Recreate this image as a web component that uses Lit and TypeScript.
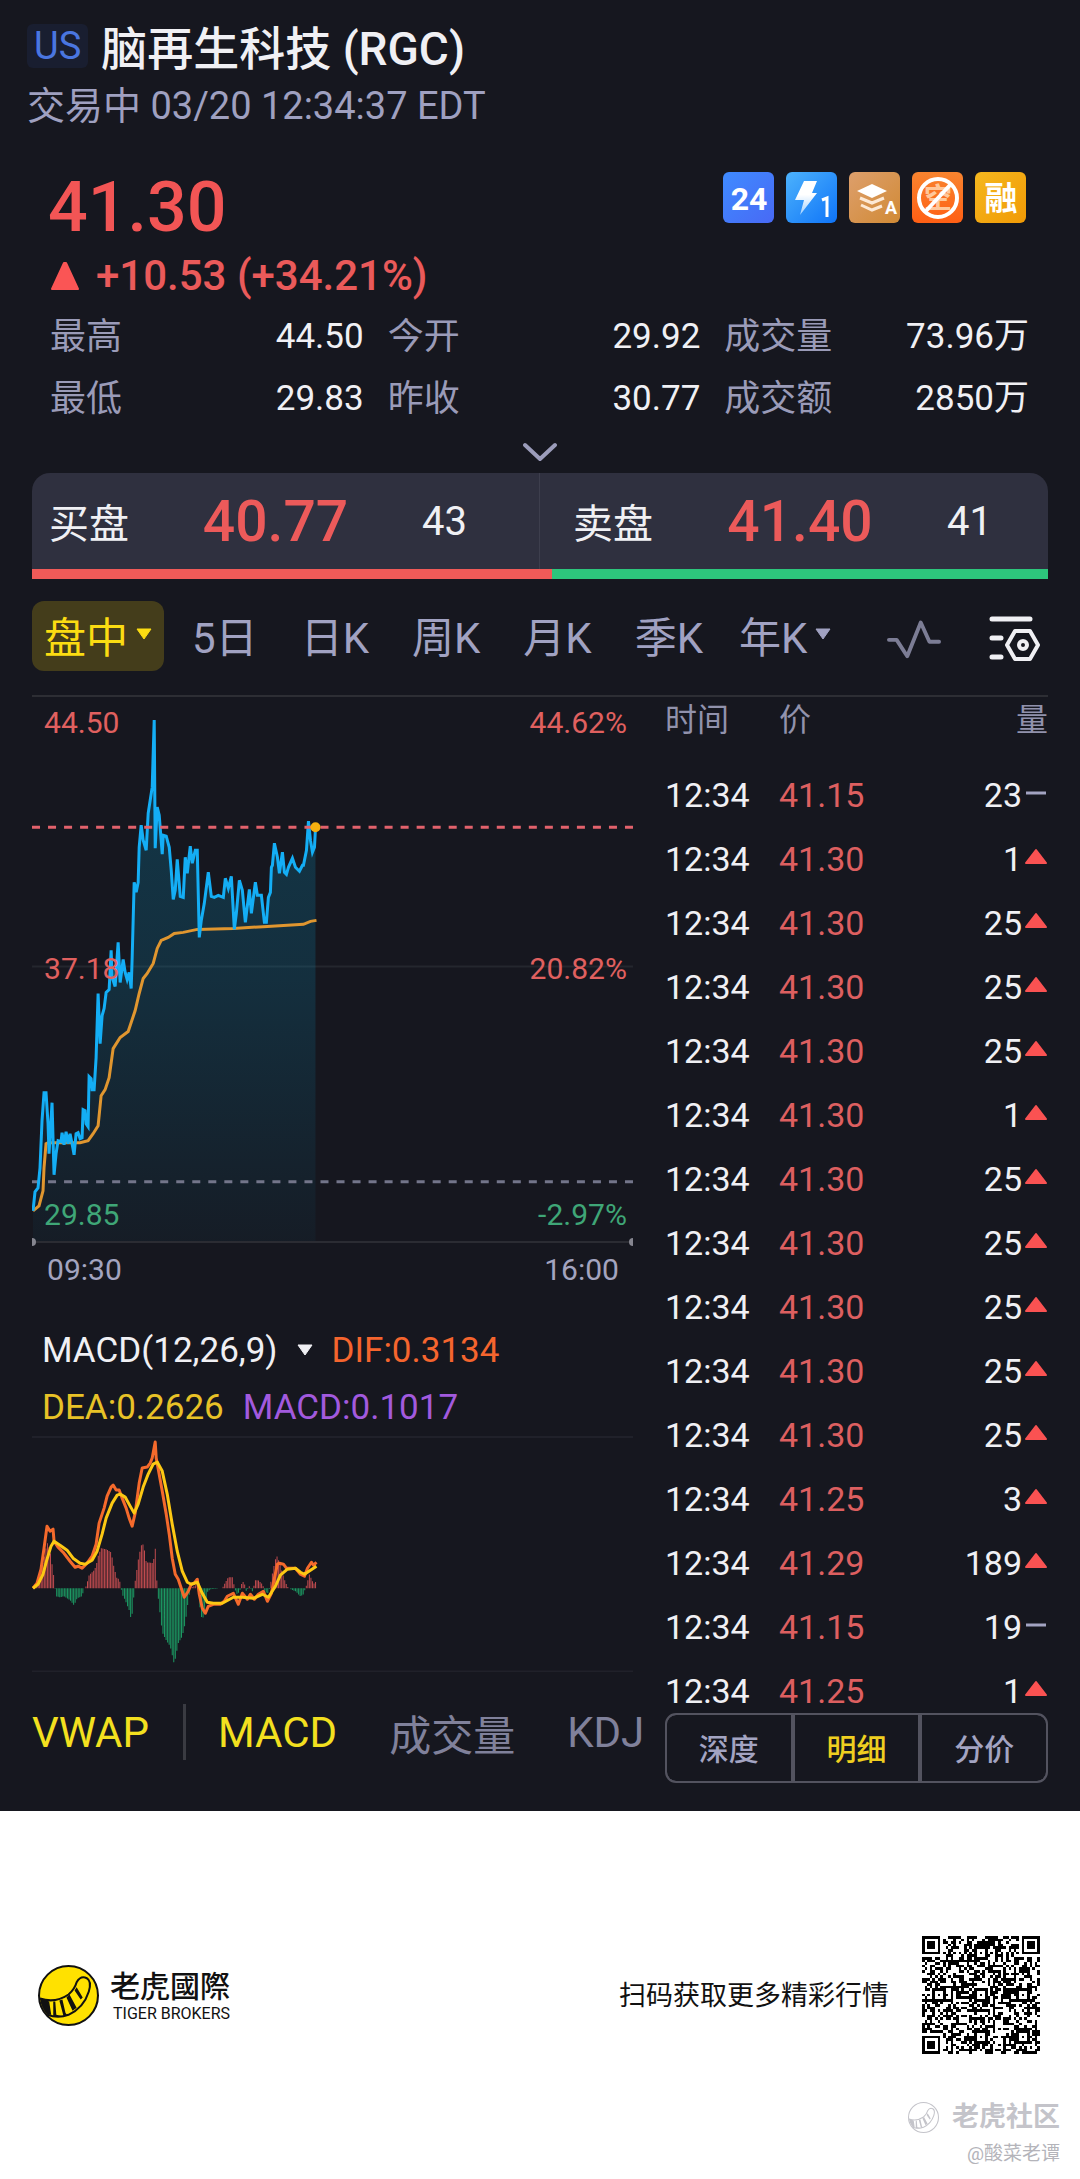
import { LitElement, html, svg, css } from "lit";
import { customElement, state } from "lit/decorators.js";
import { classMap } from "lit/directives/class-map.js";

type Point = [number, number];

const PRICE: Point[] = [
  [1, 513], [3, 494], [6, 490], [8, 470], [10, 423], [12, 395], [14, 395], [16, 426], [17, 456],
  [20, 405], [22, 477], [24, 456], [26, 443], [29, 444], [30, 435], [32, 447], [34, 434], [36, 446],
  [38, 436], [40, 446], [42, 457], [44, 436], [46, 435], [48, 441], [50, 440], [51, 412], [53, 413],
  [54, 426], [56, 429], [57, 379], [59, 381], [60, 392], [62, 392], [64, 360], [66, 296], [68, 346],
  [70, 318], [72, 311], [74, 295], [77, 292], [79, 253], [80, 280], [83, 289], [86, 245], [88, 285],
  [91, 262], [93, 275], [95, 282], [97, 275], [99, 291], [100, 260], [102, 185], [104, 195],
  [106, 185], [107, 150], [109, 128], [111, 143], [114, 153], [116, 116], [118, 103], [120, 90],
  [122, 23], [123, 151], [125, 110], [127, 118], [130, 157], [131, 138], [134, 139], [137, 150],
  [139, 173], [141, 202], [143, 193], [145, 162], [148, 199], [151, 200], [153, 160], [155, 176],
  [158, 149], [160, 166], [163, 153], [165, 153], [167, 240], [169, 223], [172, 206], [176, 175],
  [179, 199], [182, 200], [186, 198], [191, 200], [193, 181], [196, 191], [199, 179], [202, 232],
  [204, 216], [207, 183], [210, 193], [213, 225], [217, 192], [219, 216], [223, 185], [225, 198],
  [229, 198], [232, 225], [234, 225], [236, 200], [238, 195], [239, 170], [240, 168], [242, 146],
  [245, 160], [247, 176], [250, 155], [252, 175], [254, 177], [256, 170], [260, 161], [263, 170],
  [267, 174], [270, 168], [271, 168], [274, 153], [276, 124], [278, 143], [280, 155], [282, 150],
  [283, 131],
];

const VWAP: Point[] = [
  [1, 513], [7, 508], [11, 493], [12, 470], [14, 446], [16, 445], [48, 445], [56, 443], [61, 436],
  [66, 428], [69, 398], [73, 392], [77, 380], [81, 351], [88, 340], [96, 334], [103, 313],
  [107, 296], [111, 281], [115, 276], [121, 266], [125, 251], [129, 243], [136, 240], [142, 236],
  [151, 235], [165, 232], [201, 231], [235, 229], [271, 227], [278, 224], [284, 223],
];

const DIF: Point[] = [
  [1, 152], [5, 147], [9, 133], [12, 112], [15, 90], [18, 95], [21, 93], [22, 105], [26, 111],
  [31, 116], [38, 125], [43, 131], [46, 130], [50, 132], [55, 127], [60, 120], [64, 108], [67, 87],
  [72, 72], [75, 60], [79, 51], [81, 49], [84, 54], [87, 54], [90, 62], [94, 72], [97, 82],
  [100, 90], [103, 77], [105, 62], [107, 47], [110, 32], [115, 31], [118, 27], [120, 22], [123, 6],
  [124, 22], [126, 33], [130, 55], [134, 78], [137, 98], [140, 122], [143, 138], [146, 143],
  [149, 152], [152, 161], [156, 155], [159, 148], [162, 147], [165, 143], [167, 158], [170, 172],
  [173, 177], [176, 170], [181, 168], [188, 168], [192, 165], [195, 160], [201, 157], [206, 168],
  [210, 157], [215, 163], [218, 158], [222, 163], [226, 158], [231, 155], [235, 165], [239, 157],
  [242, 142], [245, 128], [247, 127], [251, 128], [254, 132], [263, 132], [268, 138], [272, 140],
  [275, 132], [279, 126], [281, 129], [284, 126],
];

const DEA: Point[] = [
  [1, 152], [6, 148], [11, 138], [15, 123], [19, 110], [22, 105], [28, 109], [35, 114], [41, 122],
  [48, 127], [53, 128], [60, 124], [65, 115], [70, 98], [74, 82], [80, 67], [85, 59], [88, 58],
  [93, 61], [98, 70], [102, 77], [106, 68], [111, 51], [116, 38], [121, 28], [125, 26], [130, 35],
  [135, 58], [140, 88], [145, 115], [150, 135], [155, 146], [159, 148], [165, 146], [170, 157],
  [175, 166], [181, 167], [190, 167], [201, 161], [210, 161], [221, 162], [230, 158], [236, 161],
  [243, 150], [248, 139], [255, 133], [263, 132], [268, 136], [272, 138], [278, 134], [284, 130],
];

/* Histogram envelope: x position and signed height. */
const HIST: Point[] = [
  [1, 0], [8, 14], [12, 30], [15, 46], [18, 38], [20, 24], [22, 10], [23, 0], [24, -8], [28, -9],
  [32, -8], [38, -12], [42, -17], [45, -10], [50, -8], [52, 0], [54, 2], [57, 13], [62, 18],
  [64, 22], [66, 32], [69, 40], [74, 39], [79, 36], [82, 20], [85, 9], [87, 10], [89, 0], [90, -6],
  [93, -12], [97, -22], [99, -31], [101, -20], [102, 0], [104, 14], [106, 28], [108, 38], [110, 46],
  [112, 40], [114, 26], [121, 25], [123, 41], [124, 20], [125, 0], [127, -18], [130, -44],
  [134, -52], [138, -58], [142, -76], [146, -55], [150, -48], [153, -35], [156, -12], [158, 0],
  [163, 3], [166, -2], [168, -22], [170, -33], [173, -18], [175, -4], [178, -1], [190, 0], [192, 4],
  [196, 11], [200, 11], [202, 2], [204, -6], [207, -4], [210, 7], [212, 5], [214, -3], [217, 2],
  [220, -3], [223, 8], [226, 8], [230, 4], [233, -4], [236, -5], [238, 4], [241, 20], [244, 33],
  [247, 26], [250, 15], [253, 6], [256, 0], [263, -3], [268, -8], [271, -6], [274, 3], [277, 14],
  [280, 7], [282, 4], [284, 8],
];

const line = (points: Point[]) => points.map((p) => p.join(",")).join(" ");

function histogram(rising: boolean): string {
  let d = "";
  let k = 0;
  for (let i = 1; i < 185; i++) {
    const x = (i * 600) / 390;
    while (k < HIST.length - 2 && HIST[k + 1][0] < x) k++;
    const [x0, h0] = HIST[k];
    const [x1, h1] = HIST[k + 1];
    const h = h0 + ((h1 - h0) * (x - x0)) / (x1 - x0);
    if (rising ? h > 0.4 : h < -0.4) d += `M${x.toFixed(2)} 152v${(-h).toFixed(1)}`;
  }
  return d;
}

/* 45-module code: finder, alignment and timing patterns around a data field. */
function codeModules(): string {
  const n = 45;
  let seed = 20250320;
  const rand = () => {
    seed = (Math.imul(seed, 1664525) + 1013904223) >>> 0;
    return seed / 4294967296;
  };
  const centres = [6, 22, 38];
  let d = "";
  for (let y = 0; y < n; y++) {
    for (let x = 0; x < n; x++) {
      let on = rand() < 0.51;
      if (x === 6 || y === 6) on = (x + y) % 2 === 0;
      for (const cy of centres) {
        for (const cx of centres) {
          const r = Math.max(Math.abs(x - cx), Math.abs(y - cy));
          const corner = (cx === 6 && cy !== 22) || (cx === 38 && cy === 6);
          if (r <= 2 && !corner) on = r !== 1;
        }
      }
      for (const [fx, fy] of [[3, 3], [41, 3], [3, 41]]) {
        const r = Math.max(Math.abs(x - fx), Math.abs(y - fy));
        if (r <= 4) on = r !== 4 && r !== 2;
      }
      if (on) d += `M${x} ${y}h1v1h-1z`;
    }
  }
  return d;
}

const RISING = histogram(true);
const FALLING = histogram(false);
const CODE = codeModules();

const STATS = [
  ["最高", "44.50"], ["今开", "29.92"], ["成交量", "73.96万"],
  ["最低", "29.83"], ["昨收", "30.77"], ["成交额", "2850万"],
];

const TICKS: [string, number, boolean][] = [
  ["41.15", 23, false], ["41.30", 1, true], ["41.30", 25, true], ["41.30", 25, true],
  ["41.30", 25, true], ["41.30", 1, true], ["41.30", 25, true], ["41.30", 25, true],
  ["41.30", 25, true], ["41.30", 25, true], ["41.30", 25, true], ["41.25", 3, true],
  ["41.29", 189, true], ["41.15", 19, false], ["41.25", 1, true],
];

const caret = html`<svg class="caret" viewBox="0 0 16 12" aria-hidden="true">
  <path d="M1 1h14L8 11z" fill="currentColor" stroke="currentColor" stroke-linejoin="round" />
</svg>`;

const tail = svg`
  <path d="M2 33Q17 38 30 29Q36 24 38 17Q42 10 48 13Q53 16 50 26Q45 42 30 49Q20 53 9 49"
    fill="none" stroke="currentColor" stroke-width="2" />
  <path d="M2 33L11 36L13 49L9 49Q3 42 2 33zM15 36L17 36L18 49L22 50L25 51L15 51zM21 35L24 34L27 47L29 50L25 50zM28 32L31 29L38 42L34 45zM36 25L38 22L44 32L42 34z"
    fill="currentColor" />`;

@customElement("brand-mark")
export class BrandMark extends LitElement {
  static styles = css`
    :host { display: block; }
    svg { display: block; width: 100%; height: 100%; }
  `;
  render() {
    return html`<svg viewBox="0 0 60 60" aria-hidden="true">
      <circle cx="30" cy="30" r="29" fill="var(--mark-fill, none)" stroke="currentColor" stroke-width="2" />
      ${tail}
    </svg>`;
  }
}

@customElement("quote-badges")
export class QuoteBadges extends LitElement {
  static styles = css`
    :host { display: flex; gap: 12px; }
    svg { display: block; width: 51px; height: 51px; border-radius: 6px; }
    .num { font: 700 32px Roboto, sans-serif; }
    .small { font: 700 18px Roboto, sans-serif; }
    .han { font: 700 33px "Noto Sans CJK SC", sans-serif; }
    .ban { font: 700 28px "Noto Sans CJK SC", sans-serif; }
  `;
  render() {
    return html`
      <svg viewBox="0 0 51 51">
        <defs><linearGradient id="a" x2="1" y2="1"><stop stop-color="#3f8bff" /><stop offset="1" stop-color="#4869f5" /></linearGradient></defs>
        <rect width="51" height="51" fill="url(#a)" />
        <text class="num" x="26" y="38" text-anchor="middle" fill="#fff">24</text>
      </svg>
      <svg viewBox="0 0 51 51">
        <defs><linearGradient id="b" x2="1" y2="1"><stop stop-color="#4cb2fc" /><stop offset="1" stop-color="#0f74f8" /></linearGradient>
        <linearGradient id="b2" x2="0" y2="1"><stop offset=".4" stop-color="#fff" /><stop offset="1" stop-color="#9fd0ff" /></linearGradient></defs>
        <rect width="51" height="51" fill="url(#b)" />
        <path d="M18 9h13l-5 12h5L14 43l4-15H9z" fill="url(#b2)" />
        <path d="M36 28l5-2v19" fill="none" stroke="#fff" stroke-width="3" />
      </svg>
      <svg viewBox="0 0 51 51">
        <defs><linearGradient id="c" x2="1" y2="1"><stop stop-color="#dd9f6c" /><stop offset="1" stop-color="#d18a35" /></linearGradient></defs>
        <rect width="51" height="51" fill="url(#c)" />
        <path d="M8 19l15-7 15 7-15 7z" fill="#fff" />
        <path d="M11 26l12 5 12-5M12 33l11 5 10-4" fill="none" stroke="#fde9d5" stroke-width="3" />
        <text class="small" x="42" y="42" text-anchor="middle" fill="#fff">A</text>
      </svg>
      <svg viewBox="0 0 51 51">
        <defs><linearGradient id="d" x2="0" y2="1"><stop stop-color="#f8842f" /><stop offset="1" stop-color="#ff5f14" /></linearGradient></defs>
        <rect width="51" height="51" fill="url(#d)" />
        <text class="ban" x="26" y="36" text-anchor="middle" fill="#ffc79a">空</text>
        <circle cx="26" cy="26" r="19" fill="none" stroke="#fff" stroke-width="4" />
        <path d="M39 12L13 40" stroke="#fff" stroke-width="4" />
      </svg>
      <svg viewBox="0 0 51 51">
        <defs><linearGradient id="e" x2="1" y2="1"><stop stop-color="#f5b81f" /><stop offset="1" stop-color="#f19a05" /></linearGradient></defs>
        <rect width="51" height="51" fill="url(#e)" />
        <text class="han" x="26" y="38" text-anchor="middle" fill="#fff">融</text>
      </svg>
    `;
  }
}

@customElement("trend-chart")
export class TrendChart extends LitElement {
  static styles = css`
    :host { display: block; }
    svg { display: block; width: 100%; height: auto; }
    .label { font: 30px Roboto, sans-serif; }
    .up { fill: #e0605f; }
    .down { fill: #3fa677; }
    .time { fill: #a3a4bf; }
  `;
  render() {
    return html`<svg viewBox="0 0 600 596" role="img" aria-label="分时走势">
      <defs>
        <linearGradient id="area" gradientUnits="userSpaceOnUse" x1="0" x2="0" y1="20" y2="544">
          <stop stop-color="#0c84ac" stop-opacity=".3" />
          <stop offset=".5" stop-color="#0c84ac" stop-opacity=".22" />
          <stop offset="1" stop-color="#0c84ac" stop-opacity=".05" />
        </linearGradient>
      </defs>
      <path d="M0 269h600" stroke="#24272e" stroke-width="2" />
      <polygon points="1,544 ${line(PRICE)} 283,544" fill="url(#area)" />
      <path d="M0 544h600" stroke="#2b2c33" stroke-width="2" />
      <g fill="#85858f">
        <circle cx="0" cy="544" r="4" /><circle cx="600" cy="544" r="4" />
      </g>
      <path d="M0 484h600" stroke="#73758a" stroke-width="3" stroke-dasharray="8" />
      <polyline points=${line(VWAP)} fill="none" stroke="#e0962f" stroke-width="3" />
      <polyline points=${line(PRICE)} fill="none" stroke="#14aef5" stroke-width="3" />
      <path d="M0 130h600" stroke="#e2626c" stroke-width="3" stroke-dasharray="8" />
      <circle cx="283" cy="130" r="5" fill="#f5b010" />
      <g class="label">
        <text class="up" x="12" y="36">44.50</text>
        <text class="up" x="594" y="36" text-anchor="end">44.62%</text>
        <text class="up" x="12" y="282">37.18</text>
        <text class="up" x="594" y="282" text-anchor="end">20.82%</text>
        <text class="down" x="12" y="527">29.85</text>
        <text class="down" x="594" y="527" text-anchor="end">-2.97%</text>
        <text class="time" x="15" y="582">09:30</text>
        <text class="time" x="586" y="582" text-anchor="end">16:00</text>
      </g>
    </svg>`;
  }
}

@customElement("macd-chart")
export class MacdChart extends LitElement {
  static styles = css`
    :host { display: block; }
    svg { display: block; width: 100%; height: auto; }
  `;
  render() {
    return html`<svg viewBox="0 0 600 236" role="img" aria-label="指标走势">
      <path d="M0 1h600M0 235h600" stroke="#20212a" stroke-width="2" />
      <path d=${RISING} stroke="#c14b4f" />
      <path d=${FALLING} stroke="#1c9a63" />
      <g fill="none" stroke-width="3" stroke-linejoin="round">
        <polyline points=${line(DIF)} stroke="#f56a2c" />
        <polyline points=${line(DEA)} stroke="#fcc813" />
      </g>
    </svg>`;
  }
}

@customElement("app-root")
export class AppRoot extends LitElement {
  @state() private period = "盘中";
  @state() private view = "明细";

  static styles = css`
    :host {
      display: block;
      font-family: Roboto, "Noto Sans CJK SC", sans-serif;
      color: #f0f0f4;
    }
    * { box-sizing: border-box; }
    button {
      margin: 0;
      padding: 0;
      border: 0;
      background: none;
      font: inherit;
      color: inherit;
      white-space: nowrap;
      cursor: pointer;
    }
    .page { display: flex; flex-direction: column; min-height: 100vh; background: #fff; }
    .panel { background: #16171f; padding: 24px 32px 28px; }
    .caret { width: 16px; height: 12px; flex: none; }

    .title { display: flex; gap: 13px; height: 50px; margin: 0 -5px; }
    .market {
      height: 44px;
      padding: 0 7px;
      border-radius: 6px;
      background: #191e30;
      color: #4a76e0;
      font-size: 38px;
      line-height: 44px;
    }
    h1 { margin: 0; font-size: 46px; line-height: 50px; font-weight: 500; white-space: nowrap; }
    .status { margin: 10px -5px 0; font-size: 38px; line-height: 44px; color: #9fa0c0; }

    .quote { display: flex; justify-content: space-between; margin: 44px 22px 0 16px; }
    .last { font-size: 70px; line-height: 70px; font-weight: 500; color: #f25555; }
    .change {
      display: flex;
      align-items: center;
      gap: 16px;
      margin: 9px 18px 0;
      font-size: 42px;
      line-height: 50px;
      font-weight: 500;
      color: #ea5a5a;
    }
    .change svg { width: 30px; height: 30px; }

    .stats {
      display: grid;
      grid-template-columns: 313fr 312fr 304fr;
      column-gap: 24px;
      margin: 5px 19px 0 18px;
      font-size: 35px;
      line-height: 62px;
    }
    .stat { display: flex; justify-content: space-between; }
    .stat dt { font-size: 36px; color: #9a9bb8; }
    .stat dd { margin: 0; }
    .more { display: flex; width: 100%; height: 43px; align-items: center; justify-content: center; }
    .more svg { width: 34px; height: 20px; }

    .book {
      display: grid;
      grid-template-columns: 1fr 1fr;
      height: 96px;
      border-radius: 18px 18px 0 0;
      background: #2f303f;
      font-size: 40px;
    }
    .side { display: grid; grid-template-columns: auto 1fr auto; align-items: center; }
    .bid { padding: 0 72px 0 17px; border-right: 1px solid #3d3e4d; }
    .ask { padding: 0 56px 0 33px; }
    .side strong { font-size: 57px; font-weight: 500; text-align: center; color: #ec5a5a; }
    .ratio { display: flex; height: 10px; background: #2dc57c; }
    .ratio span { background: #f05a58; }

    .periods {
      display: flex;
      align-items: center;
      gap: 43px;
      height: 70px;
      margin: 22px 0 24px;
      font-size: 42px;
      color: #a1a2c2;
    }
    .periods button { display: flex; align-items: center; gap: 8px; height: 70px; padding-bottom: 4px; }
    .periods .menu { margin-left: -7px; }
    .periods .active {
      margin: 0 -15px 0 0;
      padding: 0 12px 4px;
      border-radius: 12px;
      background: #443d1b;
      color: #fbdc12;
    }
    .tools { display: flex; gap: 47px; margin-left: auto; padding-right: 6px; }
    .tools svg { width: 54px; height: 50px; }
    .tools .wave { padding: 0; }
    .tools .gear { padding: 4px 0 0; }

    .body {
      display: grid;
      grid-template-columns: 601fr 383fr;
      column-gap: 32px;
      border-top: 2px solid #2d2e34;
    }
    .charts { min-width: 0; }
    .legend {
      display: flex;
      flex-wrap: wrap;
      column-gap: 19px;
      margin: 28px 0 0 10px;
      font-size: 35px;
      line-height: 57px;
      height: 114px;
    }
    .legend button { display: flex; align-items: center; gap: 19px; }
    .legend .dif { color: #f5652e; }
    .legend .dea { color: #e8c227; }
    .legend .macd { color: #a25ade; }
    .studies {
      display: flex;
      align-items: center;
      height: 58px;
      margin: 31px 0 22px;
      font-size: 42px;
      color: #80819b;
    }
    .studies .on { color: #f3e01f; }
    .studies i { flex: none; width: 3px; height: 56px; margin: 0 32px 0 34px; background: #3a3b42; }
    .studies .gap { margin: 0 52px; }

    .ticks { display: flex; flex-direction: column; min-width: 0; }
    .list { flex: 1 1 0; min-height: 0; overflow: hidden; }
    table { width: 100%; border-collapse: collapse; font-size: 34px; }
    th {
      height: 66px;
      padding: 0 0 20px;
      font-size: 32px;
      line-height: 46px;
      font-weight: 400;
      text-align: left;
      color: #9192ac;
    }
    td { height: 64px; padding: 0; }
    .when { width: 114px; }
    .cost { color: #dd5f60; }
    .lot { display: flex; justify-content: flex-end; align-items: center; gap: 2px; }
    .lot svg { width: 24px; height: 24px; }
    th.end { text-align: right; }

    .views {
      display: grid;
      grid-template-columns: repeat(3, 1fr);
      column-gap: 4px;
      height: 70px;
      border: 2px solid #53535f;
      border-radius: 11px;
      overflow: hidden;
      background: #53535f;
      font-size: 30px;
      font-weight: 500;
      color: #a3a4c2;
    }
    .views button { padding-bottom: 2px; background: #16171f; }
    .views button:first-child { border-radius: 9px 0 0 9px; }
    .views button:last-child { border-radius: 0 9px 9px 0; }
    .views .on { color: #efcf20; }

    footer { flex: 1; padding: 125px 20px 0 38px; color: #111; }
    .brand { display: flex; align-items: center; height: 118px; padding-right: 20px; }
    .brand brand-mark { width: 61px; height: 61px; --mark-fill: #ffe100; }
    .names { display: flex; flex-direction: column; gap: 4px; margin: 0 auto 0 11px; }
    .names b { font-size: 30px; line-height: 34px; font-weight: 500; font-family: "Noto Sans CJK TC", sans-serif; }
    .names span { padding-left: 3px; font-size: 16px; line-height: 18px; }
    .hint { margin: 0 33px 4px 0; font-size: 27px; }
    .code { width: 118px; height: 118px; }
    .credit {
      display: flex;
      flex-direction: column;
      align-items: flex-end;
      margin-top: 45px;
      color: #c4c4ca;
    }
    .club { display: flex; align-items: center; gap: 13px; font-size: 27px; line-height: 36px; font-weight: 700; }
    .club brand-mark { width: 31px; height: 31px; }
    .author { font-size: 19px; line-height: 38px; color: #b4b4ba; }
  `;

  private periodButton(name: string, menu = false) {
    return html`<button
      class=${classMap({ menu, active: this.period === name })}
      @click=${() => (this.period = name)}
    >${name}${menu ? caret : ""}</button>`;
  }

  render() {
    return html`
      <div class="page">
        <main class="panel">
          <div class="title"><span class="market">US</span><h1>脑再生科技 (RGC)</h1></div>
          <div class="status">交易中 03/20 12:34:37 EDT</div>

          <div class="quote"><div class="last">41.30</div><quote-badges></quote-badges></div>
          <div class="change">
            <svg viewBox="0 0 30 30" aria-hidden="true"><path d="M14 2h2l12 26H2z" fill="#fa5555" stroke="#fa5555" stroke-width="2" stroke-linejoin="round" /></svg>
            <span>+10.53 (+34.21%)</span>
          </div>

          <dl class="stats">
            ${STATS.map(([k, v]) => html`<div class="stat"><dt>${k}</dt><dd>${v}</dd></div>`)}
          </dl>
          <button class="more" aria-label="展开">
            <svg viewBox="0 0 34 20"><path d="M2 3l15 14L32 3" fill="none" stroke="#9b9cba" stroke-width="4" stroke-linecap="round" stroke-linejoin="round" /></svg>
          </button>

          <section class="book">
            <div class="side bid"><span>买盘</span><strong>40.77</strong><span>43</span></div>
            <div class="side ask"><span>卖盘</span><strong>41.40</strong><span>41</span></div>
          </section>
          <div class="ratio"><span style="width:${(43 / 84) * 100}%"></span></div>

          <nav class="periods">
            ${this.periodButton("盘中", true)} ${this.periodButton("5日")} ${this.periodButton("日K")}
            ${this.periodButton("周K")} ${this.periodButton("月K")} ${this.periodButton("季K")}
            ${this.periodButton("年K", true)}
            <div class="tools">
              <button class="wave" aria-label="走势">
                <svg viewBox="0 0 56 50"><path d="M2 29h8l11 17L35 11l9 20h10" fill="none" stroke="#7c7d95" stroke-width="4" stroke-linecap="round" stroke-linejoin="round" /></svg>
              </button>
              <button class="gear" aria-label="设置">
                <svg viewBox="0 0 54 50" fill="none" stroke="#f0f0f4" stroke-linecap="round" stroke-linejoin="round">
                  <path d="M4 6h38M4 25h9M4 44h9" stroke-width="5" />
                  <path d="M27 18h15l8 14-8 14H27l-8-14z" stroke-width="4" />
                  <circle cx="35" cy="32" r="4" stroke-width="4" />
                </svg>
              </button>
            </div>
          </nav>

          <div class="body">
            <section class="charts">
              <trend-chart></trend-chart>
              <div class="legend">
                <button>MACD(12,26,9)${caret}</button>
                <span class="dif">DIF:0.3134</span>
                <span class="dea">DEA:0.2626</span>
                <span class="macd">MACD:0.1017</span>
              </div>
              <macd-chart></macd-chart>
              <div class="studies">
                <button class="on">VWAP</button><i></i><button class="on">MACD</button>
                <button class="gap">成交量</button><button>KDJ</button>
              </div>
            </section>

            <section class="ticks">
              <div class="list">
                <table>
                  <thead><tr><th class="when">时间</th><th>价</th><th class="end">量</th></tr></thead>
                  <tbody>
                    ${TICKS.map(([price, size, up]) => html`<tr>
                      <td>12:34</td>
                      <td class="cost">${price}</td>
                      <td><div class="lot">${size}<svg viewBox="0 0 24 24" aria-hidden="true">${up
                        ? svg`<path d="M12 3L22 16H2z" fill="#fa5252" stroke="#fa5252" stroke-width="2" stroke-linejoin="round" />`
                        : svg`<path d="M2 10h20" stroke="#a3a4c2" stroke-width="3" />`}</svg></div></td>
                    </tr>`)}
                  </tbody>
                </table>
              </div>
              <div class="views">
                ${["深度", "明细", "分价"].map((v) => html`<button
                  class=${classMap({ on: this.view === v })}
                  @click=${() => (this.view = v)}
                >${v}</button>`)}
              </div>
            </section>
          </div>
        </main>

        <footer>
          <div class="brand">
            <brand-mark></brand-mark>
            <div class="names"><b>老虎國際</b><span>TIGER BROKERS</span></div>
            <p class="hint">扫码获取更多精彩行情</p>
            <svg class="code" viewBox="0 0 45 45" shape-rendering="crispEdges" role="img" aria-label="二维码"><path d=${CODE} /></svg>
          </div>
          <div class="credit">
            <div class="club"><brand-mark></brand-mark>老虎社区</div>
            <div class="author">@酸菜老谭</div>
          </div>
        </footer>
      </div>
    `;
  }
}
